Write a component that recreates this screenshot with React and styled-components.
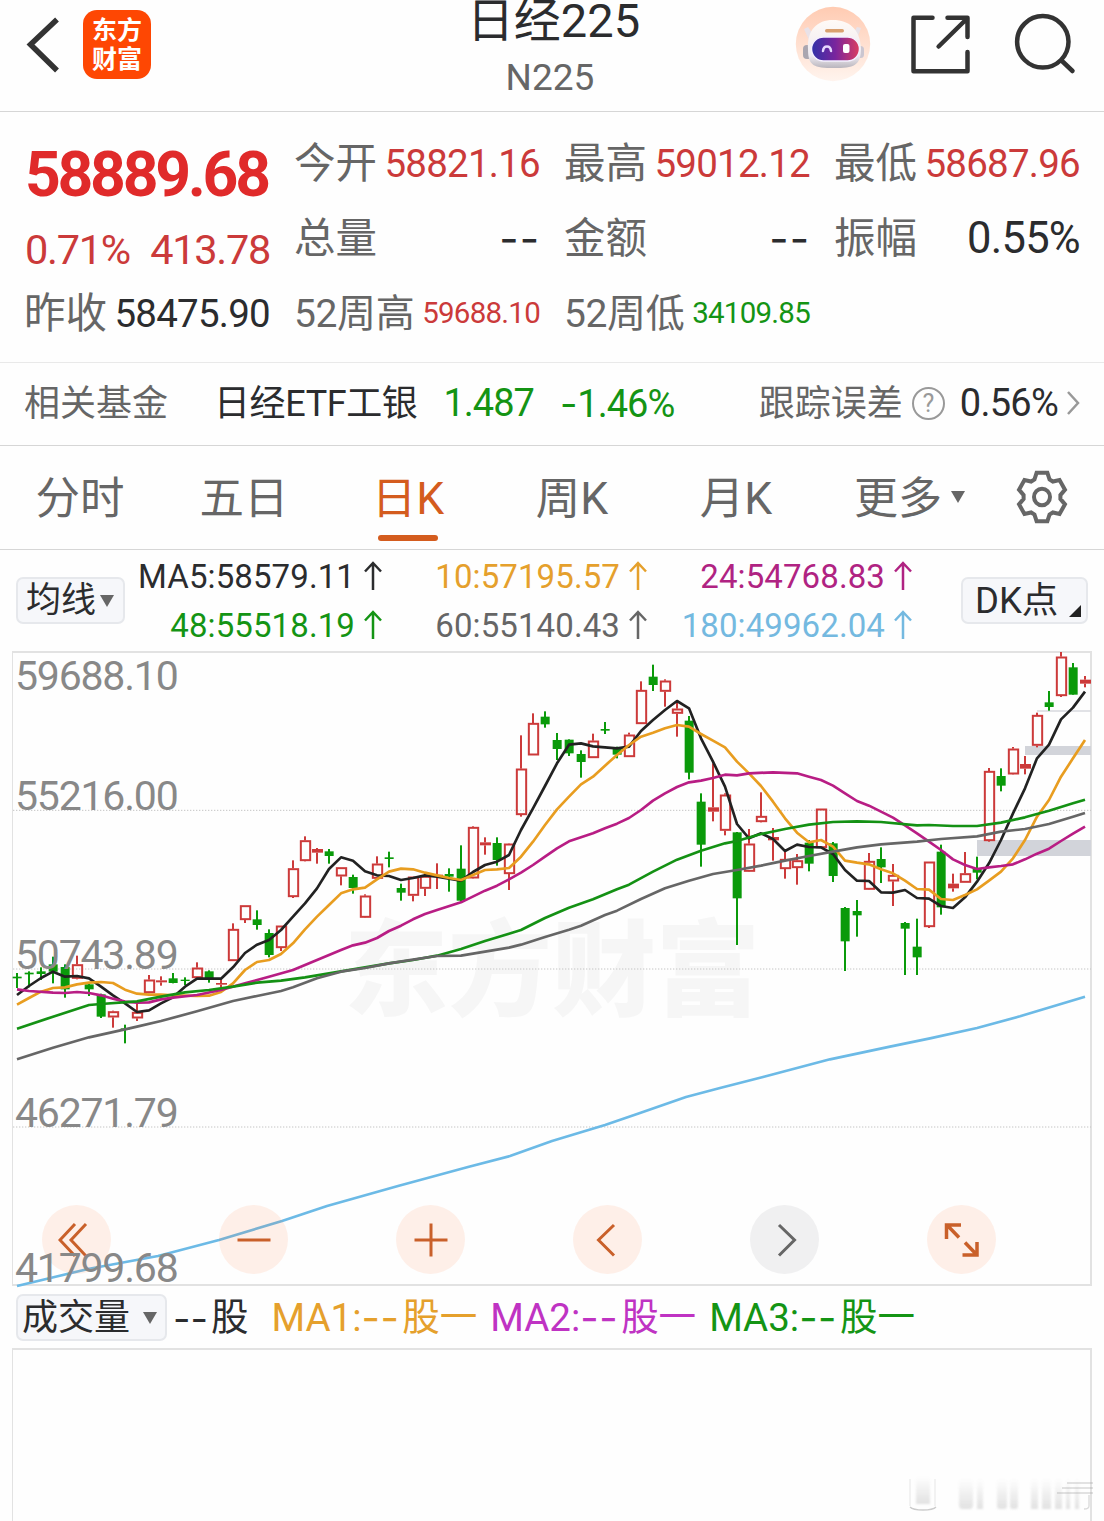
import React from "react";
import styled, { createGlobalStyle } from "styled-components";

const GlobalStyle = createGlobalStyle`
  * {
    box-sizing: border-box;
  }
  body {
    margin: 0;
    background: #fff;
    font-family: Roboto, "Noto Sans CJK SC", sans-serif;
    color: #2b2c2e;
  }
`;

const Page = styled.div`
  width: 1104px;
  height: 1521px;
  overflow: hidden;
  background: #fefefe;
  display: flex;
  flex-direction: column;
`;

/* ---------- header ---------- */
const Header = styled.header`
  height: 112px;
  flex: none;
  display: grid;
  grid-template-columns: 1fr 300px 1fr;
  border-bottom: 1px solid #d6d6d6;
`;
const HeaderLeft = styled.div`
  display: flex;
  align-items: flex-start;
  padding: 10px 0 0 24px;
  gap: 19px;
`;
const Logo = styled.div`
  width: 68px;
  height: 69px;
  padding-top: 4px;
  border-radius: 14px;
  background: #fe4703;
  color: #fff;
  font-family: "Noto Sans CJK SC", sans-serif;
  font-size: 25px;
  font-weight: 700;
  line-height: 29px;
  text-align: center;
`;
const Titles = styled.div`
  text-align: center;
  padding-left: 6px;
`;
const Title = styled.h1`
  margin: 1px 0 0;
  font-size: 47px;
  font-weight: 400;
  line-height: 40px;
  padding-right: 3px;
`;
const Code = styled.div`
  margin-top: 17px;
  font-size: 37px;
  line-height: 40px;
  color: #666;
  padding-right: 10px;
`;
const HeaderRight = styled.div`
  display: flex;
  justify-content: flex-end;
  align-items: flex-start;
  padding: 6px 25px 0 0;
`;

/* ---------- quote ---------- */
const Quote = styled.section`
  height: 251px;
  flex: none;
  display: grid;
  grid-template-columns: repeat(4, 245px);
  grid-template-rows: repeat(3, 75px);
  column-gap: 25px;
  padding: 14px 0 0 25px;
  border-bottom: 1px solid #e9e9e9;
`;
const Latest = styled.div`
  grid-row: 1 / 3;
  display: flex;
  flex-direction: column;
`;
const Price = styled.div`
  height: 100px;
  line-height: 98px;
  font-size: 62.5px;
  font-weight: 700;
  letter-spacing: -3.3px;
  color: #e02a2a;
`;
const Change = styled.div`
  display: flex;
  justify-content: space-between;
  font-size: 41.5px;
  line-height: 48px;
  letter-spacing: -1.3px;
  color: #cb3a3a;
`;
const Cell = styled.div`
  display: flex;
  align-items: center;
  justify-content: space-between;
  white-space: nowrap;
  padding-bottom: 1px;
  grid-column: ${(p) => p.$col};
  grid-row: ${(p) => p.$row};
`;
const Label = styled.span`
  font-size: ${(p) => p.$size || 41.5}px;
  letter-spacing: ${(p) => p.$spacing || 0}px;
  line-height: 50px;
  margin-left: -1px;
  padding-top: 1px;
  color: #666;
`;
const Value = styled.span`
  font-size: ${(p) => p.$size || 38.5}px;
  letter-spacing: -0.75px;
  color: ${(p) => p.$color || "#2b2c2e"};
`;
const Dashes = styled.span`
  font-family: Inter, sans-serif;
  font-size: ${(p) => p.$size || 42}px;
  letter-spacing: ${(p) => p.$gap || 0}px;
`;

/* ---------- fund ---------- */
const Fund = styled.section`
  height: 83px;
  flex: none;
  display: flex;
  align-items: center;
  padding: 0 24px 2px 25px;
  font-size: 36px;
  white-space: nowrap;
  border-bottom: 1px solid #d6d6d6;
`;
const FundName = styled.span`
  margin-left: 46px;
  line-height: 50px;
  padding-top: 1px;
  letter-spacing: -0.4px;
`;
const FundValue = styled.span`
  margin-left: 26px;
  font-size: 38px;
  letter-spacing: -1px;
  color: #149414;
`;
const FundError = styled.div`
  margin-left: auto;
  display: flex;
  align-items: center;
  svg:last-child {
    margin-left: 8px;
  }
`;
const Help = styled.span`
  width: 33px;
  height: 33px;
  margin: 0 15px 0 9px;
  border: 2.5px solid #999;
  border-radius: 50%;
  color: #999;
  font-size: 25px;
  line-height: 29px;
  text-align: center;
`;

/* ---------- tabs ---------- */
const Tabs = styled.nav`
  height: 104px;
  flex: none;
  display: flex;
  margin-left: -2px;
  border-bottom: 1px solid #d6d6d6;
`;
const Tab = styled.div`
  width: 164px;
  height: 103px;
  padding-top: 23px;
  display: flex;
  flex-direction: column;
  align-items: center;
  font-size: 44.5px;
  line-height: 60px;
  color: ${(p) => (p.$active ? "#d45c1e" : "#666")};
  &::after {
    content: "";
    width: 60px;
    height: 6px;
    margin-top: 6px;
    border-radius: 3px;
    background: ${(p) => (p.$active ? "#d45c1e" : "transparent")};
  }
`;
const More = styled.div`
  width: 164px;
  height: 103px;
  padding: 23px 0 0 36px;
  display: flex;
  font-size: 44px;
  line-height: 60px;
  color: #666;
`;
const Triangle = styled.i`
  width: 0;
  height: 0;
  border: 7.5px solid transparent;
  border-top: 12px solid #666;
  border-bottom: 0;
  margin: ${(p) => p.$margin || "0"};
`;
const GearBox = styled.div`
  padding: 23px 0 0 33px;
`;

/* ---------- legend ---------- */
const Legend = styled.section`
  height: 101px;
  flex: none;
  display: flex;
  padding: 0 16px;
`;
const Chip = styled.div`
  width: ${(p) => p.$width}px;
  height: 47px;
  margin-top: ${(p) => p.$top}px;
  margin-left: ${(p) => (p.$end ? "auto" : "0")};
  padding-left: ${(p) => p.$pad}px;
  display: flex;
  align-items: center;
  border: 2px solid #e6e8ec;
  border-radius: 7px;
  background: #f6f7fa;
  font-size: ${(p) => p.$size || 35}px;
  line-height: 42px;
  white-space: nowrap;
`;
const Averages = styled.div`
  display: grid;
  grid-template-columns: 257px 265px 265px;
  grid-template-rows: 49px 49px;
  padding-top: 2px;
`;
const Average = styled.div`
  display: flex;
  justify-content: flex-end;
  align-items: center;
  gap: 9px;
  font-size: 33px;
  letter-spacing: 0.1px;
  color: ${(p) => p.$color};
  svg {
    margin-top: -2px;
  }
`;
const Corner = styled.i`
  width: 0;
  height: 0;
  border-left: 12px solid transparent;
  border-bottom: 12px solid #222;
  margin: 21px 0 0 11px;
`;

/* ---------- chart ---------- */
const Chart = styled.section`
  position: relative;
  width: 1080px;
  height: 635px;
  flex: none;
  margin-left: 12px;
  border: 2px solid #e2e2e2;
  border-left-width: 1px;
`;
const Watermark = styled.div`
  position: absolute;
  left: 331px;
  top: 255px;
  font-family: "Noto Sans CJK SC", sans-serif;
  font-size: 104px;
  font-weight: 900;
  line-height: 110px;
  color: #f6f6f6;
`;
const Plot = styled.svg`
  position: absolute;
  left: -1px;
  top: -1px;
  overflow: visible;
`;
const AxisLabel = styled.div`
  position: absolute;
  left: 2px;
  top: ${(p) => p.$top}px;
  font-size: 41px;
  line-height: 40px;
  letter-spacing: -1.2px;
  color: #888;
`;
const Controls = styled.div`
  position: absolute;
  left: 29px;
  top: 552px;
  display: flex;
  gap: 108px;
`;
const Control = styled.div`
  width: 69px;
  height: 69px;
  border-radius: 50%;
  display: flex;
  align-items: center;
  justify-content: center;
  background: ${(p) => (p.$disabled ? "rgba(120,120,125,0.1)" : "rgba(255,110,40,0.1)")};
  color: ${(p) => (p.$disabled ? "#666" : "#c9602a")};
`;

/* ---------- volume ---------- */
const VolumeBar = styled.section`
  height: 62px;
  flex: none;
  display: flex;
  padding-left: 16px;
`;
const VolumeText = styled.span`
  display: inline-flex;
  align-items: center;
  height: 60px;
  padding-top: 3px;
  margin-left: ${(p) => p.$left}px;
  font-size: 38.5px;
  white-space: nowrap;
  color: ${(p) => p.$color};
`;
const Unit = styled.span`
  font-size: 37.5px;
  margin-left: 3px;
  line-height: 50px;
  padding-bottom: 1px;
`;
const VolumeChart = styled.section`
  width: 1080px;
  flex: 1;
  margin-left: 12px;
  border: 2px solid #e2e2e2;
  border-left-width: 1px;
  border-bottom: 0;
  display: flex;
  align-items: flex-end;
  justify-content: flex-end;
`;

// plot units are a third of a pixel: [high, top, bottom, low, rising]
const candles = [
  [969, 980, 985, 1014, 0], [964, 968, 973, 1012, 0], [952, 964, 972, 990, 0], [920, 943, 965, 1000, 0],
  [943, 951, 1018, 1043, 0], [917, 943, 986, 988, 1], [1000, 1003, 1018, 1038, 0], [1031, 1033, 1100, 1104, 0],
  [1082, 1084, 1102, 1133, 1], [1124, 1135, 1139, 1180, 0], [1060, 1086, 1105, 1113, 1], [975, 989, 1029, 1030, 1],
  [979, 991, 997, 1007, 1], [969, 985, 999, 1000, 0], [982, 989, 993, 1005, 0], [937, 953, 984, 984, 1],
  [961, 964, 984, 998, 0], [988, 999, 1004, 1013, 1], [820, 837, 933, 933, 1], [766, 766, 810, 819, 1],
  [781, 808, 825, 839, 0], [838, 849, 915, 922, 0], [827, 827, 894, 903, 1], [631, 655, 741, 744, 1],
  [559, 571, 633, 634, 1], [594, 597, 608, 641, 1], [597, 604, 618, 641, 0], [652, 652, 679, 706, 1],
  [674, 681, 714, 731, 0], [733, 737, 803, 804, 1], [619, 641, 686, 688, 1], [605, 622, 627, 652, 0],
  [701, 714, 728, 752, 0], [680, 680, 737, 754, 1], [668, 678, 716, 738, 1], [640, 674, 680, 717, 1],
  [655, 672, 680, 725, 0], [586, 656, 752, 755, 0], [529, 531, 685, 686, 1], [562, 577, 586, 614, 1],
  [562, 579, 630, 647, 0], [580, 581, 672, 720, 1], [256, 356, 495, 500, 1], [190, 219, 316, 316, 1],
  [184, 200, 223, 233, 0], [249, 270, 297, 330, 0], [268, 269, 310, 318, 0], [301, 312, 336, 383, 0],
  [251, 272, 324, 324, 1], [216, 237, 242, 252, 0], [290, 294, 314, 325, 0], [248, 254, 321, 321, 1],
  [94, 120, 222, 222, 1], [44, 80, 105, 123, 0], [88, 92, 125, 170, 1], [150, 176, 191, 260, 1],
  [198, 212, 368, 388, 0], [430, 455, 584, 650, 0], [340, 472, 485, 514, 1], [430, 434, 542, 556, 1],
  [546, 547, 745, 885, 0], [537, 581, 665, 666, 1], [427, 498, 516, 517, 1], [534, 561, 571, 632, 1],
  [605, 627, 657, 686, 1], [612, 631, 654, 704, 1], [570, 578, 641, 664, 0], [476, 476, 594, 594, 1],
  [576, 580, 678, 696, 0], [771, 774, 874, 963, 0], [750, 783, 796, 860, 0], [609, 633, 719, 720, 1],
  [592, 627, 652, 699, 0], [642, 675, 694, 768, 1], [816, 819, 836, 975, 0], [806, 890, 922, 975, 0],
  [635, 635, 831, 834, 1], [584, 605, 772, 794, 0], [671, 701, 715, 725, 1], [606, 670, 698, 698, 1],
  [620, 655, 668, 688, 0], [354, 363, 573, 575, 1], [355, 378, 407, 424, 0], [291, 296, 373, 374, 1],
  [318, 342, 356, 373, 1], [188, 195, 287, 292, 1], [123, 157, 171, 182, 0], [6, 20, 138, 141, 1],
  [39, 52, 134, 134, 0], [78, 89, 101, 112, 1],
];

const ma5 = [
  1035, 1008, 984, 965, 980, 978, 985, 1010, 1036, 1060, 1086, 1081, 1060, 1042, 1010, 986, 986, 986, 952, 909,
  884, 870, 840, 800, 760, 715, 657, 622, 632, 664, 676, 678, 690, 684, 676, 680, 686, 692, 666, 645, 635, 615,
  540, 475, 408, 340, 284, 280, 289, 292, 295, 290, 243, 210, 180, 153, 175, 265, 335, 410, 522, 565, 550, 567,
  603, 584, 591, 592, 612, 660, 692, 693, 727, 728, 720, 744, 746, 768, 774, 742, 695, 640, 570, 490, 415, 325,
  284, 208, 173, 125,
].map((y, i) => `${51 + i * 36},${y}`).join(" ");

const lines = [
  {
    color: "#6cbae6",
    points:
      "51,1908 264,1857 474,1818 657,1770 846,1713 981,1668 1194,1608 1404,1551 1530,1518 1656,1473 1815,1425 1920,1389 2058,1341 2160,1314 2289,1281 2490,1228 2670,1190 2790,1165 2931,1134 3060,1099 3140,1075 3255,1040",
  },
  { color: "#222", points: ma5 },
  {
    color: "#e89d20",
    points:
      "51,1064 87,1044 123,1025 159,1014 195,1012 231,1003 267,998 303,996 339,999 375,1019 411,1031 447,1034 483,1034 519,1036 555,1037 591,1038 627,1037 663,1026 699,1000 735,960 771,936 807,930 843,912 879,880 915,838 951,800 987,765 1023,730 1059,718 1095,713 1131,688 1167,665 1203,656 1239,658 1275,668 1311,676 1347,684 1383,690 1419,675 1455,660 1491,658 1527,654 1563,620 1599,575 1635,525 1671,478 1707,440 1743,403 1779,380 1815,347 1851,315 1887,285 1923,260 1959,248 1995,235 2031,225 2067,230 2103,252 2139,272 2175,292 2211,335 2247,370 2283,408 2319,455 2355,505 2391,548 2427,577 2463,570 2499,590 2535,632 2571,638 2607,643 2643,658 2679,670 2715,692 2751,717 2787,719 2823,747 2859,750 2895,735 2931,718 2967,692 3003,665 3039,625 3075,570 3111,500 3147,450 3183,380 3219,325 3255,270",
  },
  {
    color: "#b81d84",
    points:
      "51,1018 87,1023 159,1028 195,1029 231,1026 267,1029 303,1036 339,1046 375,1055 411,1058 447,1057 483,1048 519,1043 591,1035 663,1020 735,1000 807,980 879,960 951,930 1023,900 1059,886 1095,878 1131,864 1167,843 1203,827 1239,808 1275,792 1311,780 1383,757 1455,722 1491,707 1527,688 1563,668 1599,645 1635,620 1671,595 1707,574 1743,562 1779,550 1815,535 1851,521 1887,504 1923,480 1959,452 1995,430 2031,411 2067,397 2103,392 2139,384 2175,374 2211,376 2247,370 2319,367 2391,370 2427,380 2463,390 2499,407 2535,430 2571,453 2607,467 2643,485 2679,503 2715,526 2751,550 2787,575 2823,600 2859,628 2895,645 2931,657 2967,652 3003,648 3039,643 3075,628 3111,611 3147,596 3183,573 3219,551 3255,530",
  },
  {
    color: "#149114",
    points:
      "51,1136 159,1100 267,1065 303,1062 411,1054 483,1040 555,1027 627,1020 699,1010 771,998 843,992 915,982 987,970 1059,958 1095,952 1167,940 1239,930 1311,917 1383,897 1455,873 1527,851 1563,840 1635,804 1707,773 1779,748 1851,718 1887,704 1959,665 2031,629 2103,602 2175,580 2211,573 2283,552 2355,537 2427,524 2499,516 2571,514 2643,516 2751,526 2787,525 2859,528 2931,528 3003,518 3075,502 3147,482 3219,460 3255,449",
  },
  {
    color: "#666",
    points:
      "51,1228 159,1193 267,1162 375,1138 411,1130 483,1113 591,1084 699,1053 771,1038 843,1023 879,1012 951,985 1023,965 1095,954 1167,940 1239,929 1311,918 1383,917 1455,905 1527,893 1563,884 1635,861 1707,839 1743,827 1815,795 1851,782 1923,747 1995,715 2067,692 2139,672 2211,660 2283,647 2355,632 2427,618 2499,605 2571,592 2643,583 2751,575 2823,567 2931,559 3003,545 3075,537 3147,522 3219,500 3255,489",
  },
];

const axis = [
  { text: "59688.10", top: 3 },
  { text: "55216.00", top: 123 },
  { text: "50743.89", top: 282 },
  { text: "46271.79", top: 440 },
  { text: "41799.68", top: 595 },
];

const averages = [
  { text: "MA5:58579.11", color: "#2b2c2e" },
  { text: "10:57195.57", color: "#e5a02c" },
  { text: "24:54768.83", color: "#b02382" },
  { text: "48:55518.19", color: "#149414" },
  { text: "60:55140.43", color: "#666" },
  { text: "180:49962.04", color: "#74b9e0" },
];

const gearPoints = [0, 60, 120, 180, 240, 300]
  .flatMap((a) => [
    [a - 24, 18.5],
    [a - 13, 24],
    [a + 13, 24],
    [a + 24, 18.5],
  ])
  .map(([a, r]) => {
    const t = ((a - 90) * Math.PI) / 180;
    return `${(27 + r * Math.cos(t)).toFixed(2)},${(27 + r * Math.sin(t)).toFixed(2)}`;
  })
  .join(" ");

const Candle = ({ index, data }) => {
  const [high, top, bottom, low, rising] = data;
  const x = 51 + index * 36;
  if (!rising) {
    return (
      <g fill="#0a9a0a">
        <rect x={x - 3} y={high} width="6" height={low - high} />
        <rect x={x - 13} y={top} width="27" height={bottom - top} />
      </g>
    );
  }
  const small = bottom - top < 15;
  return (
    <g fill="#cc3a3a">
      <rect x={x - 3} y={high} width="6" height={top - high} />
      <rect x={x - 3} y={bottom} width="6" height={Math.max(low - bottom, 0)} />
      {small ? (
        <rect x={x - 15} y={top} width="33" height={bottom - top} />
      ) : (
        <rect x={x - 12.5} y={top + 2.5} width="28" height={bottom - top - 5} fill="none" stroke="#cc3a3a" strokeWidth="6" />
      )}
    </g>
  );
};

const UpArrow = () => (
  <svg width="18" height="30" viewBox="0 0 18 30" fill="none" stroke="currentColor" strokeWidth="2.5">
    <path d="M9 29V2M1 10.5L9 2l8 8.5" />
  </svg>
);

const Robot = () => (
  <svg width="76" height="76" viewBox="0 0 76 76">
    <defs>
      <linearGradient id="halo" x1="0" y1="0" x2="0" y2="1">
        <stop offset="0" stopColor="#ffcbb2" />
        <stop offset="1" stopColor="#fff4ee" />
      </linearGradient>
      <linearGradient id="visor" x1="0" y1="0" x2="1" y2="0">
        <stop offset="0" stopColor="#3131a8" />
        <stop offset="0.5" stopColor="#7a259d" />
        <stop offset="1" stopColor="#dc3d61" />
      </linearGradient>
      <linearGradient id="shell" x1="0" y1="0" x2="0" y2="1">
        <stop offset="0" stopColor="#fffaf6" />
        <stop offset="0.75" stopColor="#eeeaf0" />
        <stop offset="1" stopColor="#b9b5bd" />
      </linearGradient>
    </defs>
    <circle cx="38" cy="38" r="37.2" fill="url(#halo)" />
    <path d="M9 23l4-2 5 7-4 6zM66 22l-4-1-4 7 4 5z" fill="#e9e2e8" />
    <rect x="8" y="39" width="9" height="14" rx="4" fill="#aaa6b0" />
    <rect x="62" y="40" width="7" height="12" rx="3.5" fill="#cbc6d0" />
    <path d="M13 43C12 24 22 14 38 14s27 9 28 28c0 18-7 20-27 20S13 60 13 43z" fill="url(#shell)" />
    <rect x="16.500" y="31" width="48" height="24" rx="12" fill="url(#visor)" stroke="#f4efff" strokeWidth="1.500" />
    <rect x="30" y="23" width="19" height="3.500" rx="1.700" fill="#d9a06f" />
    <path d="M28 45c.5-6 7.500-6 8 0" fill="none" stroke="#e7d8ff" strokeWidth="2.500" strokeLinecap="round" />
    <rect x="48" y="38" width="6.500" height="9" rx="2" fill="#fff" />
  </svg>
);

// ghosted signature in the lower right corner
const Ghost = () => (
  <svg width="183" height="50" viewBox="0 0 183 50" overflow="visible">
    <defs>
      <linearGradient id="ghost" x1="0" y1="0" x2="0" y2="1">
        <stop offset="0" stopColor="#999" stopOpacity="0" />
        <stop offset="1" stopColor="#999" stopOpacity="0.28" />
      </linearGradient>
      <filter id="soft">
        <feGaussianBlur stdDeviation="1" />
      </filter>
    </defs>
    <g fill="url(#ghost)" filter="url(#soft)">
      <rect x="9" y="6" width="14" height="27" />
      <rect x="52" y="8" width="14" height="30" rx="4" />
      <rect x="70" y="8" width="6" height="30" />
      <rect x="90" y="8" width="10" height="30" rx="3" />
      <rect x="103" y="8" width="8" height="30" rx="3" />
      <rect x="124" y="8" width="7" height="30" />
      <rect x="135" y="8" width="9" height="30" />
      <rect x="148" y="8" width="7" height="30" />
      <rect x="159" y="8" width="4" height="30" />
      <rect x="168" y="8" width="4" height="30" />
    </g>
    <g fill="none" stroke="#999" strokeOpacity="0.5" strokeWidth="1.300">
      <path d="M3 36c4 4 22 4 26 0" />
      <path d="M160 12h26M155 17h31M150 22h36M182 24v11q0 3-5 3" strokeOpacity="0.35" />
    </g>
    <path d="M3 8v27M28 8v27" stroke="#888" strokeOpacity="0.1" strokeWidth="2" />
  </svg>
);

const VolumeAverage = ({ name, color, left }) => (
  <VolumeText $color={color} $left={left}>
    {name}
    <Dashes $size={40} $gap={0.5}>--</Dashes>
    <Unit>股一</Unit>
  </VolumeText>
);

const App = () => {
  return (
    <>
      <GlobalStyle />
      <Page>
        <Header>
          <HeaderLeft>
            <svg width="40" height="68" viewBox="0 0 40 68" fill="none" stroke="#333" strokeWidth="5.5">
              <path d="M33 9.500L6.500 34.500 33 60.500" />
            </svg>
            <Logo>
              东方
              <br />
              财富
            </Logo>
          </HeaderLeft>
          <Titles>
            <Title>日经225</Title>
            <Code>N225</Code>
          </Titles>
          <HeaderRight>
            <Robot />
            <svg width="103" height="76" viewBox="871 6 103 76" fill="none" stroke="#333" strokeWidth="4.500" strokeLinecap="round" strokeLinejoin="round">
              <path d="M932.500 17.700h-19v53.500h54V52M947.500 17.700h20V37M938.600 46.500l28.500-28" />
            </svg>
            <svg width="105" height="76" viewBox="974 6 105 76" fill="none" stroke="#333" strokeWidth="4.500" strokeLinecap="round">
              <circle cx="1042.800" cy="41.800" r="25.700" />
              <path d="M1061.500 60.500l11 10.500" />
            </svg>
          </HeaderRight>
        </Header>

        <Quote>
          <Latest>
            <Price>58889.68</Price>
            <Change>
              <span>0.71%</span>
              <span>413.78</span>
            </Change>
          </Latest>
          <Cell $col={2} $row={1}>
            <Label>今开</Label>
            <Value $color="#cb3a3a">58821.16</Value>
          </Cell>
          <Cell $col={3} $row={1}>
            <Label>最高</Label>
            <Value $color="#cb3a3a">59012.12</Value>
          </Cell>
          <Cell $col={4} $row={1}>
            <Label>最低</Label>
            <Value $color="#cb3a3a">58687.96</Value>
          </Cell>
          <Cell $col={2} $row={2}>
            <Label>总量</Label>
            <Dashes $gap={1}>--</Dashes>
          </Cell>
          <Cell $col={3} $row={2}>
            <Label>金额</Label>
            <Dashes $gap={1}>--</Dashes>
          </Cell>
          <Cell $col={4} $row={2}>
            <Label>振幅</Label>
            <Value $size={43.5}>0.55%</Value>
          </Cell>
          <Cell $col={1} $row={3}>
            <Label>昨收</Label>
            <Value>58475.90</Value>
          </Cell>
          <Cell $col={2} $row={3}>
            <Label $size={39} $spacing={-0.4}>52周高</Label>
            <Value $size={29.5} $color="#cb3a3a">59688.10</Value>
          </Cell>
          <Cell $col={3} $row={3}>
            <Label $size={39} $spacing={-0.4}>52周低</Label>
            <Value $size={29.5} $color="#149414">34109.85</Value>
          </Cell>
        </Quote>

        <Fund>
          <Label $size={36}>相关基金</Label>
          <FundName>日经ETF工银</FundName>
          <FundValue>1.487</FundValue>
          <FundValue>
            <Dashes $size={38}>-</Dashes>1.46%
          </FundValue>
          <FundError>
            <Label $size={36}>跟踪误差</Label>
            <Help>?</Help>
            <Value $size={38}>0.56%</Value>
            <svg width="14" height="28" viewBox="0 0 14 28" fill="none" stroke="#999" strokeWidth="2.500">
              <path d="M2 3l10 11L2 25" />
            </svg>
          </FundError>
        </Fund>

        <Tabs>
          <Tab>分时</Tab>
          <Tab>五日</Tab>
          <Tab $active>日K</Tab>
          <Tab>周K</Tab>
          <Tab>月K</Tab>
          <More>
            更多
            <Triangle $margin="22px 0 0 9px" />
          </More>
          <GearBox>
            <svg width="54" height="56" viewBox="0 0 54 54" preserveAspectRatio="none" fill="none" stroke="#666" strokeWidth="4">
              <polygon points={gearPoints} />
              <circle cx="27" cy="27" r="8" />
            </svg>
          </GearBox>
        </Tabs>

        <Legend>
          <Chip $width={109} $top={27} $pad={8}>
            均线
            <Triangle $margin="0 0 0 4px" />
          </Chip>
          <Averages>
            {averages.map((item) => (
              <Average key={item.text} $color={item.color}>
                {item.text}
                <UpArrow />
              </Average>
            ))}
          </Averages>
          <Chip $width={127} $top={27} $pad={12} $size={36.5} $end>
            DK点
            <Corner />
          </Chip>
        </Legend>

        <Chart>
          <Watermark>东方财富</Watermark>
          <Plot width="1080" height="634" viewBox="36 6 3240 1902">
            <g fill="#d2d4da">
              <rect x="3111" y="181" width="162" height="4" />
              <rect x="3075" y="288" width="198" height="27" />
              <rect x="2931" y="570" width="342" height="48" />
            </g>
            <g stroke="#c4c4c4" strokeWidth="3" strokeDasharray="4 5">
              <path d="M39 481H3273M39 957H3273M39 1431H3273" />
            </g>
            {candles.map((data, i) => (
              <Candle key={i} index={i} data={data} />
            ))}
            {lines.map((line) => (
              <polyline key={line.color} points={line.points} fill="none" stroke={line.color} strokeWidth="8" strokeLinejoin="round" />
            ))}
          </Plot>
          <Controls>
            <Control>
              <svg width="38" height="36" viewBox="0 0 38 36" fill="none" stroke="currentColor" strokeWidth="3">
                <path d="M17 2L2 18l15 16M28 2L13 18l15 16" />
              </svg>
            </Control>
            <Control>
              <svg width="36" height="36" viewBox="0 0 36 36" fill="none" stroke="currentColor" strokeWidth="3">
                <path d="M1.500 18h33" />
              </svg>
            </Control>
            <Control>
              <svg width="36" height="36" viewBox="0 0 36 36" fill="none" stroke="currentColor" strokeWidth="3">
                <path d="M1.500 18h33M18 1.500v33" />
              </svg>
            </Control>
            <Control>
              <svg width="36" height="36" viewBox="0 0 36 36" fill="none" stroke="currentColor" strokeWidth="3">
                <path d="M24 3L8.500 18 24 33.500" />
              </svg>
            </Control>
            <Control $disabled>
              <svg width="36" height="36" viewBox="0 0 36 36" fill="none" stroke="currentColor" strokeWidth="3">
                <path d="M12 3l15.500 15L12 33.500" />
              </svg>
            </Control>
            <Control>
              <svg width="36" height="36" viewBox="0 0 36 36" fill="none" stroke="currentColor" strokeWidth="3.500">
                <path d="M2.500 17V3H17M3 3l12 12.500M33 20v13H18.500M33 33L21 20.500" />
              </svg>
            </Control>
          </Controls>
          {axis.map((label) => (
            <AxisLabel key={label.text} $top={label.top}>
              {label.text}
            </AxisLabel>
          ))}
        </Chart>

        <VolumeBar>
          <Chip $width={151} $top={8} $pad={4} $size={36}>
            成交量
            <Triangle $margin="0 0 0 13px" />
          </Chip>
          <VolumeText $color="#2b2c2e" $left={6}>
            <Dashes $size={38}>--</Dashes>
            <Unit>股</Unit>
          </VolumeText>
          <VolumeAverage name="MA1:" color="#e5a02c" left={23} />
          <VolumeAverage name="MA2:" color="#bf33c3" left={13} />
          <VolumeAverage name="MA3:" color="#149414" left={13} />
        </VolumeBar>
        <VolumeChart>
          <Ghost />
        </VolumeChart>
      </Page>
    </>
  );
};

export default App;
